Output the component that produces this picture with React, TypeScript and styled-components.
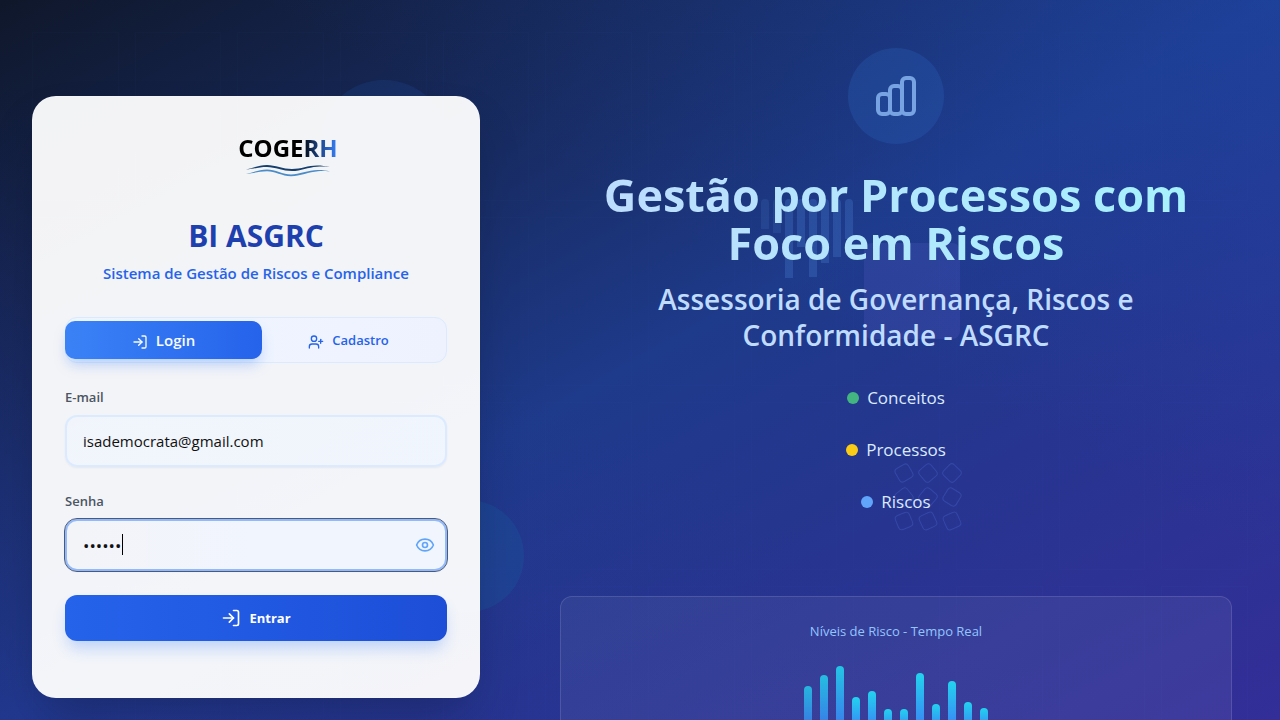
import React, { useState } from "react";
import styled, { createGlobalStyle } from "styled-components";
import { Eye, LogIn, UserPlus } from "lucide-react";

const GlobalStyle = createGlobalStyle`
  *, *::before, *::after { box-sizing: border-box; }
  body {
    margin: 0;
    background:
      linear-gradient(to top right, rgba(49, 46, 160, 0.18), rgba(49, 46, 160, 0) 45%, rgba(30, 80, 190, 0) 60%, rgba(30, 80, 190, 0.3)) fixed,
      linear-gradient(to bottom right, #0f172a 0%, #1e3a8a 50%, #332e98 100%) fixed;
    font-family: "Segoe UI", "Open Sans", "Noto Sans", sans-serif;
  }
  h1, h2, p, ul { margin: 0; padding: 0; }
  button, input { font-family: inherit; }
`;

const Page = styled.div`
  position: relative;
  display: grid;
  grid-template-columns: 2fr 3fr;
  min-height: 972px;
  overflow: hidden;
`;

const Backdrop = styled.div`
  position: absolute;
  inset: 0;
  pointer-events: none;
`;

const CellGrid = styled.div`
  position: absolute;
  inset: 0;
  display: grid;
  grid-template-columns: repeat(12, 1fr);
  grid-template-rows: repeat(5, 1fr);
  gap: 16px;
  padding: 32px;
`;

const Cell = styled.div`
  border: 1px solid rgba(96, 165, 250, 0.02);
`;

const Shape = styled.div<{ $x: number; $y: number; $size: number; $radius: string; $color: string }>`
  position: absolute;
  left: ${(p) => p.$x}px;
  top: ${(p) => p.$y}px;
  width: ${(p) => p.$size}px;
  height: ${(p) => p.$size}px;
  border-radius: ${(p) => p.$radius};
  background: ${(p) => p.$color};
`;

const HangingBars = styled.div`
  position: absolute;
  left: 761px;
  top: 199px;
  display: flex;
  align-items: flex-start;
  gap: 4px;
`;

const HangingBar = styled.div<{ $height: number; $alpha: number }>`
  width: 8px;
  height: ${(p) => p.$height}px;
  border-radius: 4px 4px 0 0;
  background: rgba(96, 165, 250, ${(p) => p.$alpha});
`;

const TileGrid = styled.div`
  position: absolute;
  left: 896px;
  top: 465px;
  display: grid;
  grid-template-columns: repeat(3, 16px);
  gap: 8px;
`;

const Tile = styled.div<{ $angle: number }>`
  height: 16px;
  border: 1px solid rgba(96, 130, 240, 0.24);
  border-radius: 4px;
  transform: rotate(${(p) => p.$angle}deg);
`;

const FormSide = styled.main`
  position: relative;
  padding: 96px 32px;
`;

const Card = styled.section`
  max-width: 448px;
  padding: 32px 32px 56px;
  border: 1px solid rgba(255, 255, 255, 0.2);
  border-radius: 24px;
  background: rgba(255, 255, 255, 0.95);
  box-shadow: 0 25px 50px -12px rgba(0, 0, 0, 0.25);
  text-align: center;
`;

const Logo = styled.div`
  display: flex;
  flex-direction: column;
  align-items: center;
  height: 87px;
  padding: 3px 0 0 64px;
`;

const LogoText = styled.span`
  font-size: 24px;
  line-height: 32px;
  font-weight: 700;
  background: linear-gradient(to right, #000 62%, #2f6fdc 94%, #3b82f6);
  background-clip: text;
  -webkit-background-clip: text;
  color: transparent;
`;

const Title = styled.h1`
  font-size: 30px;
  line-height: 40px;
  font-weight: 700;
  color: #1e40af;
`;

const Tagline = styled.p`
  margin-top: 5px;
  font-size: 15px;
  line-height: 24px;
  font-weight: 600;
  color: #2563eb;
`;

const Tabs = styled.div`
  display: grid;
  grid-template-columns: 52fr 48fr;
  margin: 32px 0 24px;
  padding: 3px 3px 3px 0;
  border: 1px solid #dbeafe;
  border-radius: 12px;
  background: linear-gradient(to right, #eff6ff, #eef2ff);
`;

const Tab = styled.button<{ $active?: boolean }>`
  display: flex;
  align-items: center;
  justify-content: center;
  gap: 8px;
  height: 38px;
  margin-left: ${(p) => (p.$active ? "-1px" : "0")};
  padding: 0 ${(p) => (p.$active ? 0 : 8)}px 0 0;
  border: 0;
  border-radius: 10px;
  font-size: ${(p) => (p.$active ? 15 : 13)}px;
  font-weight: 600;
  color: ${(p) => (p.$active ? "#f8fbff" : "#2563eb")};
  background: ${(p) => (p.$active ? "linear-gradient(to right, #3b82f6, #2563eb)" : "transparent")};
  box-shadow: ${(p) => (p.$active ? "0 8px 14px -3px rgba(59, 130, 246, 0.35)" : "none")};

  svg { margin-top: 3px; }
`;

const Form = styled.form`
  display: flex;
  flex-direction: column;
  gap: 24px;
  text-align: left;
`;

const Field = styled.div`
  display: flex;
  flex-direction: column;
  gap: 8px;
`;

const Label = styled.label`
  font-size: 13px;
  line-height: 20px;
  font-weight: 600;
  color: #4b5563;
`;

const InputWrap = styled.div`
  position: relative;
  display: flex;
`;

const Input = styled.input`
  width: 100%;
  height: 52px;
  padding: 0 46px 0 16px;
  border: 2px solid #dbeafe;
  border-radius: 12px;
  outline: none;
  font-size: 15px;
  color: #111;
  caret-color: transparent;
  background: linear-gradient(to right, rgba(239, 246, 255, 0.5), rgba(239, 246, 255, 0.7));
  box-shadow: 0 1px 2px rgba(0, 0, 0, 0.05);

  &[type="password"] { font-size: 17px; }

  &:focus {
    border-color: #93b9f8;
    outline: 1px solid #4a5a7c;
    background: linear-gradient(to right, #f3f4f8, #f1f5fe 50%);
  }
`;

const Caret = styled.span`
  position: absolute;
  left: 57px;
  top: 15px;
  width: 1px;
  height: 21px;
  background: #000;
`;

const EyeButton = styled.button`
  position: absolute;
  right: 12px;
  top: 16px;
  display: flex;
  padding: 0;
  border: 0;
  color: #60a5fa;
  background: none;
`;

const Submit = styled.button`
  display: flex;
  align-items: center;
  justify-content: center;
  gap: 8px;
  height: 46px;
  border: 0;
  border-radius: 12px;
  font-size: 13px;
  font-weight: 700;
  color: #fff;
  background: linear-gradient(to right, #2563eb, #1d4ed8);
  box-shadow: 0 10px 15px -3px rgba(59, 130, 246, 0.3);
`;

const InfoSide = styled.aside`
  position: relative;
  display: flex;
  flex-direction: column;
  align-items: center;
  padding: 48px;
  text-align: center;
`;

const IconDisc = styled.div`
  display: grid;
  place-items: center;
  width: 96px;
  height: 96px;
  margin-bottom: 27px;
  border-radius: 50%;
  color: #78a3e2;
  background: rgba(40, 95, 180, 0.34);
`;

const Headline = styled.h2`
  font-size: 45px;
  line-height: 48px;
  font-weight: 700;
  background: linear-gradient(to right, #bfdbfe, #a5f3fc);
  background-clip: text;
  -webkit-background-clip: text;
  color: transparent;
`;

const Subhead = styled.p`
  margin: 14px 0 31px;
  font-size: 28px;
  line-height: 36px;
  font-weight: 600;
  color: #bfdbfe;
`;

const Topics = styled.ul`
  display: flex;
  flex-direction: column;
  align-items: center;
  gap: 24px;
  list-style: none;
`;

const Topic = styled.li<{ $dot: string }>`
  display: flex;
  align-items: center;
  gap: 8px;
  font-size: 17px;
  line-height: 28px;
  color: #dbeafe;

  &::before {
    content: "";
    width: 12px;
    height: 12px;
    border-radius: 50%;
    background: ${(p) => p.$dot};
  }
`;

const ChartCard = styled.section`
  align-self: stretch;
  margin-top: 80px;
  padding: 24px;
  border: 1px solid rgba(255, 255, 255, 0.12);
  border-radius: 12px;
  background: rgba(255, 255, 255, 0.06);
`;

const ChartTitle = styled.p`
  margin-bottom: 24px;
  font-size: 13px;
  line-height: 20px;
  color: #93c5fd;
`;

const Chart = styled.div`
  display: flex;
  align-items: flex-end;
  justify-content: center;
  gap: 8px;
  height: 64px;
`;

const ChartBar = styled.div<{ $height: number; $opacity: number }>`
  width: 8px;
  height: ${(p) => p.$height}px;
  border-radius: 4px 4px 0 0;
  background: linear-gradient(to top, #3b82f6, #22d3ee);
  opacity: ${(p) => p.$opacity};
`;

const hanging = [30, 34, 79, 48, 78, 64, 58, 40];
const angles = [60, 50, 44, 52, 40, 32, 68, 65, 66];
const levels = [43, 54, 63, 32, 38, 20, 20, 56, 25, 48, 27, 21];

export default function App() {
  const [email, setEmail] = useState("isademocrata@gmail.com");
  const [password, setPassword] = useState("123456");
  const [visible, setVisible] = useState(false);

  return (
    <Page>
      <GlobalStyle />
      <Backdrop aria-hidden="true">
        <CellGrid>
          {Array.from({ length: 60 }, (_, i) => <Cell key={i} />)}
        </CellGrid>
        <Shape $x={320} $y={80} $size={128} $radius="50%" $color="rgba(37, 99, 200, 0.15)" />
        <Shape $x={412} $y={500} $size={112} $radius="50%" $color="rgba(20, 110, 170, 0.2)" />
        <Shape $x={864} $y={243} $size={96} $radius="8px" $color="rgba(129, 120, 248, 0.13)" />
        <HangingBars>
          {hanging.map((h, i) => <HangingBar key={i} $height={h} $alpha={i < 2 ? 0.12 : 0.2} />)}
        </HangingBars>
        <TileGrid>
          {angles.map((a, i) => <Tile key={i} $angle={a} />)}
        </TileGrid>
      </Backdrop>

      <FormSide>
        <Card>
          <Logo>
            <LogoText>COGERH</LogoText>
            <svg width="84" height="14" viewBox="0 0 84 14" aria-hidden="true">
              <path d="M0 5.6C7 4 13 1 21 1s16 4 25 4 16-3.500 25-3.500c5 0 8 .5 13 1.500-5-.5-8-.7-13-.3-9 .6-16 4.300-25 4.300S29 3 21 3 8 4.800 0 5.600Z" fill="#173f6d" />
              <path d="M0 10C7 8.500 13 5.500 21 5.500S37 10.500 45 10.500s17-4.500 27-4.500c5 0 8 .5 12 1.500-5-.5-8-.6-12-.3-9 .6-18 5-27 5S29 7.300 21 7.300 8 9.200 0 10Z" fill="#4a8bc8" />
            </svg>
          </Logo>
          <Title>BI ASGRC</Title>
          <Tagline>Sistema de Gestão de Riscos e Compliance</Tagline>

          <Tabs role="tablist">
            <Tab type="button" role="tab" aria-selected="true" $active>
              <LogIn size={16} />
              Login
            </Tab>
            <Tab type="button" role="tab" aria-selected="false">
              <UserPlus size={16} />
              Cadastro
            </Tab>
          </Tabs>

          <Form onSubmit={(e) => e.preventDefault()}>
            <Field>
              <Label htmlFor="email">E-mail</Label>
              <InputWrap>
                <Input id="email" type="email" value={email} onChange={(e) => setEmail(e.target.value)} />
              </InputWrap>
            </Field>
            <Field>
              <Label htmlFor="password">Senha</Label>
              <InputWrap>
                <Input
                  id="password"
                  type={visible ? "text" : "password"}
                  value={password}
                  onChange={(e) => setPassword(e.target.value)}
                  autoFocus
                />
                <Caret />
                <EyeButton type="button" aria-label="Mostrar senha" onClick={() => setVisible(!visible)}>
                  <Eye size={20} />
                </EyeButton>
              </InputWrap>
            </Field>
            <Submit type="submit">
              <LogIn size={20} />
              Entrar
            </Submit>
          </Form>
        </Card>
      </FormSide>

      <InfoSide>
        <IconDisc>
          <svg width="48" height="48" viewBox="0 0 24 24" fill="none" stroke="currentColor" strokeWidth="2" strokeLinecap="round" strokeLinejoin="round" aria-hidden="true">
            <path d="M9 19v-6a2 2 0 00-2-2H5a2 2 0 00-2 2v6a2 2 0 002 2h2a2 2 0 002-2zm0 0V9a2 2 0 012-2h2a2 2 0 012 2v10m-6 0a2 2 0 002 2h2a2 2 0 002-2m0 0V5a2 2 0 012-2h2a2 2 0 012 2v14a2 2 0 01-2 2h-2a2 2 0 01-2-2z" />
          </svg>
        </IconDisc>
        <Headline>Gestão por Processos com Foco em Riscos</Headline>
        <Subhead>Assessoria de Governança, Riscos e Conformidade - ASGRC</Subhead>
        <Topics>
          <Topic $dot="#43b581">Conceitos</Topic>
          <Topic $dot="#facc15">Processos</Topic>
          <Topic $dot="#60a5fa">Riscos</Topic>
        </Topics>
        <ChartCard>
          <ChartTitle>Níveis de Risco - Tempo Real</ChartTitle>
          <Chart>
            {levels.map((h, i) => <ChartBar key={i} $height={h} $opacity={i < 3 ? 0.8 + i * 0.05 : 1} />)}
          </Chart>
        </ChartCard>
      </InfoSide>
    </Page>
  );
}
